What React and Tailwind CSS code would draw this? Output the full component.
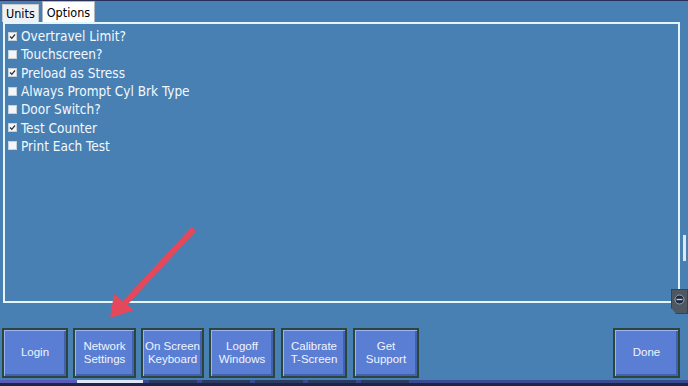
import React from 'react'

/* ── Options list ── */
const OPTIONS = [
  { label: 'Overtravel Limit?', checked: true },
  { label: 'Touchscreen?', checked: false },
  { label: 'Preload as Stress', checked: true },
  { label: 'Always Prompt Cyl Brk Type', checked: false },
  { label: 'Door Switch?', checked: false },
  { label: 'Test Counter', checked: true },
  { label: 'Print Each Test', checked: false },
]

const BUTTONS = [
  { lines: ['Login'], w: 'w-[66px]' },
  { lines: ['Network', 'Settings'], w: 'w-[63px]' },
  { lines: ['On Screen', 'Keyboard'], w: 'w-[63px]' },
  { lines: ['Logoff', 'Windows'], w: 'w-[66px]' },
  { lines: ['Calibrate', 'T-Screen'], w: 'w-[66px] ml-[1px]' },
  { lines: ['Get', 'Support'], w: 'w-[66px] ml-[1px]' },
]

function CheckBox({ checked }) {
  return (
    <span className="w-[9px] h-[9px] bg-[#f4f6f8] border border-[#c8d0d8] flex items-center justify-center">
      {checked && (
        <svg width="7" height="7" viewBox="0 0 7 7">
          <path d="M1 3.5 L2.8 5.3 L6 1.5" stroke="#333" strokeWidth="1.3" fill="none" />
        </svg>
      )}
    </span>
  )
}

function PanelButton({ lines, w }) {
  return (
    <div
      className={`${w} h-[50px] flex flex-col items-center justify-center bg-[#5a7ed4] border-2 border-[#2c463c] shadow-[inset_1px_1px_0_#9cb2f2,inset_-2px_-2px_0_#4262b0] text-[#f0f4ff] text-[11.5px] leading-[13.5px] text-center`}
      style={{ fontFamily: '"Liberation Sans", Arial, sans-serif' }}
    >
      {lines.map(l => <span key={l}>{l}</span>)}
    </div>
  )
}

export default function App() {
  return (
    <div className="relative w-[688px] h-[386px] overflow-hidden bg-[#4880b4] flex flex-col" style={{ fontFamily: '"DejaVu Sans Condensed", "Liberation Sans", Arial, sans-serif' }}>
      {/* top edge */}
      <div className="h-[1px] bg-[#26305a]" />

      {/* tabs */}
      <div className="h-[21px] flex items-end pl-[2px] gap-[3px]">
        <div className="h-[18px] px-[3px] bg-[#eef1f4] text-black text-[12.5px] leading-[18px] border-t border-l border-r border-[#c8cdd2]">Units</div>
        <div className="h-[21px] px-[4px] bg-white text-black text-[12.5px] leading-[22px] border-t border-l border-r border-[#b0b8c0]">Options</div>
      </div>

      {/* panel + right gutter */}
      <div className="flex h-[281px] pl-[3px]">
        <div className="w-[677px] h-full border-2 border-[#e4f6fc] pt-[3px] pl-[3px]">
          {OPTIONS.map(o => (
            <div key={o.label} className="h-[18.3px] flex items-center gap-[4px] text-[#f2f8fc] text-[13.5px]">
              <CheckBox checked={o.checked} />
              <span>{o.label}</span>
            </div>
          ))}
        </div>
        <div className="w-[8px] h-full flex flex-col">
          <div className="ml-[3px] mt-[213px] w-[3px] h-[26px] bg-[#dde8f4]" />
        </div>
      </div>

      {/* buttons */}
      <div className="mt-[25px] flex pl-[2px] gap-[5px]">
        {BUTTONS.map(b => <PanelButton key={b.lines.join()} {...b} />)}
        <div className="ml-auto mr-[8px]">
          <PanelButton lines={['Done']} w="w-[67px]" />
        </div>
      </div>

      {/* bottom strip */}
      <div className="mt-[2px] h-[3px] flex bg-[#3a4a90]">
        <div className="w-[77px] bg-[#5a5ab8]" />
        <div className="w-[66px] bg-[#dde6f6]" />
        <div className="w-[6px]" />
        <div className="w-[48px] bg-[#2c3a60]" />
        <div className="w-[5px]" />
        <div className="w-[48px] bg-[#2c3a60]" />
        <div className="w-[5px]" />
        <div className="w-[48px] bg-[#2c3a60]" />
        <div className="w-[5px]" />
        <div className="w-[48px] bg-[#2c3a60]" />
        <div className="w-[5px]" />
        <div className="w-[48px] bg-[#2c3a60]" />
      </div>
      <div className="flex-1 bg-[#1c2648]" />

      {/* side tab */}
      <div className="absolute left-[671px] top-[289px] w-[17px] h-[25px] bg-[#4e5862] border border-[#3a424a] flex items-start justify-center pt-[4px] [clip-path:polygon(0_0,100%_0,100%_100%,30%_100%,0_75%)]">
        <svg width="11" height="11" viewBox="0 0 11 11">
          <circle cx="5.5" cy="5.5" r="4.5" fill="#1e2840" stroke="#9aa4b0" strokeWidth="1" />
          <rect x="2.5" y="4.8" width="6" height="1.4" fill="#c8d0dc" />
        </svg>
      </div>

      {/* annotation arrow */}
      <svg className="absolute left-0 top-0 pointer-events-none" width="688" height="386">
        <line x1="192" y1="231" x2="124" y2="304" stroke="#e4485a" strokeWidth="6" strokeLinecap="round" />
        <polygon points="110,318 114,294 134,310" fill="#e4485a" />
      </svg>
    </div>
  )
}
